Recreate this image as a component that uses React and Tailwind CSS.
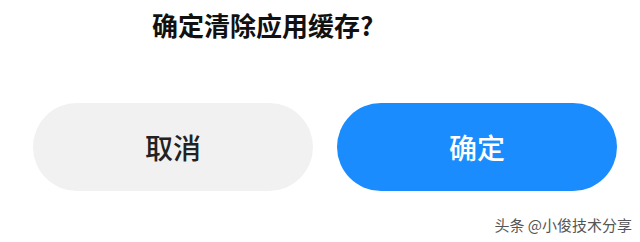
export default function App() {
  return (
    <div
      className="relative h-[242px] w-[640px] overflow-hidden bg-white"
      style={{ fontFamily: '"Noto Sans CJK SC", "Noto Sans", sans-serif' }}
    >
      <div className="pt-[6px] pl-[152px] text-[26px] leading-[38px] font-bold text-[#111]">
        确定清除应用缓存?
      </div>

      <div className="mt-[59px] flex gap-[24px] pl-[33px]">
        <button className="flex h-[88px] w-[280px] items-center justify-center rounded-full bg-[#f1f1f1] text-[28px] font-medium text-[#222]">
          取消
        </button>
        <button className="flex h-[88px] w-[280px] items-center justify-center rounded-full bg-[#1a8cfe] text-[28px] font-medium text-white">
          确定
        </button>
      </div>

      <div className="absolute right-[8px] bottom-[8px] text-[15px] leading-[18px] text-[#555]">
        头条 @小俊技术分享
      </div>
    </div>
  );
}
